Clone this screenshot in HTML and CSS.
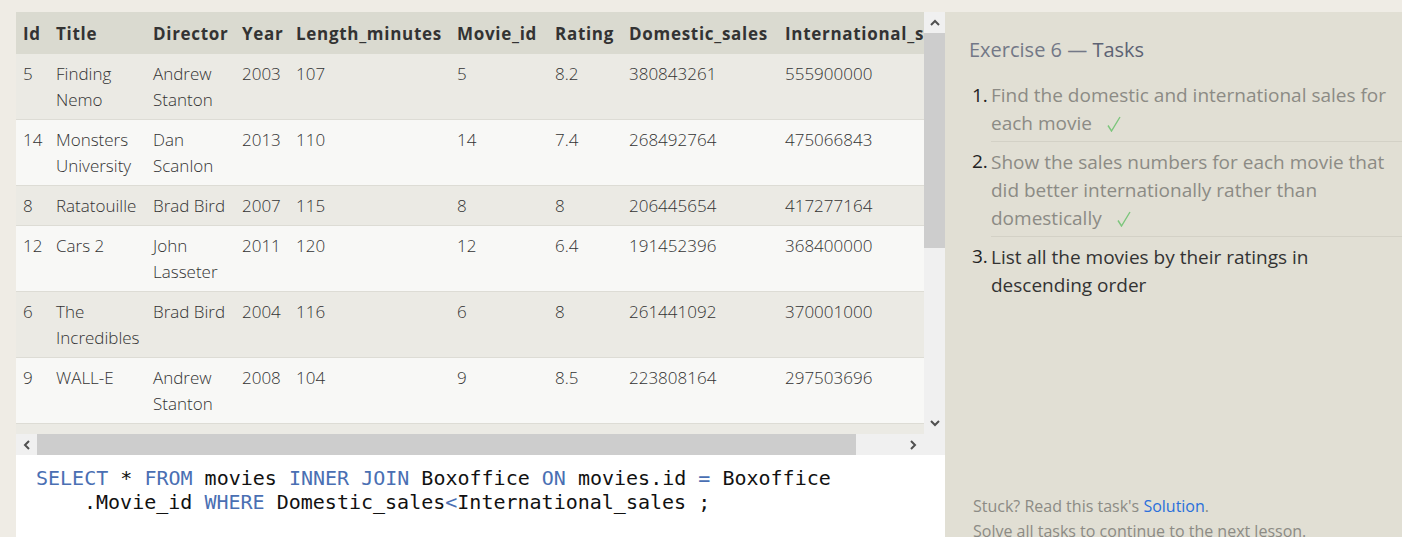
FILE: index.html
```html
<!DOCTYPE html>
<html lang="en">
<head>
<meta charset="utf-8">
<title>SQL Lesson 6 — Exercise</title>
<link rel="stylesheet" href="styles.css">
</head>
<body>
<div class="app">
  <div class="workspace">
    <div class="results">
      <div class="viewport">
        <table class="grid">
          <colgroup>
            <col class="c-id"><col class="c-title"><col class="c-director"><col class="c-year"><col class="c-length"><col class="c-movieid"><col class="c-rating"><col class="c-dom"><col class="c-int">
          </colgroup>
          <thead>
            <tr><th>Id</th><th>Title</th><th>Director</th><th>Year</th><th>Length_minutes</th><th>Movie_id</th><th>Rating</th><th>Domestic_sales</th><th>International_sales</th></tr>
          </thead>
          <tbody>
            <tr><td>5</td><td>Finding<br>Nemo</td><td>Andrew<br>Stanton</td><td>2003</td><td>107</td><td>5</td><td>8.2</td><td>380843261</td><td>555900000</td></tr>
            <tr><td>14</td><td>Monsters<br>University</td><td>Dan<br>Scanlon</td><td>2013</td><td>110</td><td>14</td><td>7.4</td><td>268492764</td><td>475066843</td></tr>
            <tr><td>8</td><td>Ratatouille</td><td>Brad Bird</td><td>2007</td><td>115</td><td>8</td><td>8</td><td>206445654</td><td>417277164</td></tr>
            <tr><td>12</td><td>Cars 2</td><td>John<br>Lasseter</td><td>2011</td><td>120</td><td>12</td><td>6.4</td><td>191452396</td><td>368400000</td></tr>
            <tr><td>6</td><td>The<br>Incredibles</td><td>Brad Bird</td><td>2004</td><td>116</td><td>6</td><td>8</td><td>261441092</td><td>370001000</td></tr>
            <tr><td>9</td><td>WALL-E</td><td>Andrew<br>Stanton</td><td>2008</td><td>104</td><td>9</td><td>8.5</td><td>223808164</td><td>297503696</td></tr>
            <tr><td>10</td><td>Up</td><td>Pete<br>Docter</td><td>2009</td><td>101</td><td>10</td><td>8.3</td><td>293004164</td><td>438338580</td></tr>
          </tbody>
        </table>
      </div>
      <div class="vscroll">
        <div class="sb-btn"><svg width="10" height="7" viewBox="0 0 10 7"><path d="M1 6 L5 2 L9 6" fill="none" stroke="#505050" stroke-width="2"/></svg></div>
        <div class="vthumb"></div>
        <div class="sb-track"></div>
        <div class="sb-btn"><svg width="10" height="7" viewBox="0 0 10 7"><path d="M1 1 L5 5 L9 1" fill="none" stroke="#505050" stroke-width="2"/></svg></div>
      </div>
      <div class="hscroll">
        <div class="sb-btn"><svg width="7" height="10" viewBox="0 0 7 10"><path d="M6 1 L2 5 L6 9" fill="none" stroke="#505050" stroke-width="2"/></svg></div>
        <div class="hthumb"></div>
        <div class="sb-track"></div>
        <div class="sb-btn"><svg width="7" height="10" viewBox="0 0 7 10"><path d="M1 1 L5 5 L1 9" fill="none" stroke="#505050" stroke-width="2"/></svg></div>
      </div>
      <div class="corner"></div>
    </div>
    <div class="editor">
      <div class="code-line"><span class="kw">SELECT</span> * <span class="kw">FROM</span> movies <span class="kw">INNER</span> <span class="kw">JOIN</span> Boxoffice <span class="kw">ON</span> movies.id <span class="kw">=</span> Boxoffice</div>
      <div class="code-line wrapped">.Movie_id <span class="kw">WHERE</span> Domestic_sales<span class="kw">&lt;</span>International_sales ;</div>
    </div>
  </div>
  <aside class="tasks">
    <h2 class="tasks-title">Exercise 6 — <span class="tasks-strong">Tasks</span></h2>
    <ol class="task-list">
      <li class="task done"><span class="num">1.</span><span class="txt">Find the domestic and international sales for each movie <svg class="check" width="14" height="16" viewBox="0 0 14 16"><path d="M1 9.5 L4.5 15 L13 1" fill="none" stroke="#7cc67c" stroke-width="1.4"/></svg></span></li>
      <li class="task done"><span class="num">2.</span><span class="txt">Show the sales numbers for each movie that did better internationally rather than domestically <svg class="check" width="14" height="16" viewBox="0 0 14 16"><path d="M1 9.5 L4.5 15 L13 1" fill="none" stroke="#7cc67c" stroke-width="1.4"/></svg></span></li>
      <li class="task"><span class="num">3.</span><span class="txt">List all the movies by their ratings in descending order</span></li>
    </ol>
    <div class="tasks-footer">
      <div>Stuck? Read this task's <a class="link" href="#">Solution</a>.</div>
      <div>Solve all tasks to continue to the next lesson.</div>
    </div>
  </aside>
</div>
</body>
</html>
```
FILE: styles.css
```css
html, body {
  margin: 0;
  height: 100%;
}
body {
  background: #efece5;
  overflow: hidden;
  font-family: "Open Sans", "Noto Sans", sans-serif;
}
.app {
  display: flex;
  padding: 12px 0 0 16px;
  height: 537px;
  box-sizing: border-box;
}
.workspace {
  width: 929px;
  flex: none;
  display: flex;
  flex-direction: column;
}
.results {
  display: grid;
  grid-template-columns: 908px 21px;
  grid-template-rows: 422px 21px;
}
.viewport {
  overflow: hidden;
  background: #ebeae4;
}
.grid {
  border-collapse: collapse;
  table-layout: fixed;
  width: 1000px;
  font-size: 17px;
  color: #333;
}
.c-id { width: 33px; }
.c-title { width: 97px; }
.c-director { width: 89px; }
.c-year { width: 54px; }
.c-length { width: 161px; }
.c-movieid { width: 98px; }
.c-rating { width: 74px; }
.c-dom { width: 156px; }
.c-int { width: 238px; }
.grid th, .grid td {
  text-align: left;
  vertical-align: top;
  line-height: 26px;
  white-space: nowrap;
  padding: 7px 7px 6px;
}
.grid td {
  font-weight: 300;
}
.grid th {
  background: #dadad0;
  font-weight: 700;
  color: #333;
  letter-spacing: 0.7px;
  padding: 9px 7px 7px;
}
.grid tbody tr {
  border-bottom: 1px solid #dddcd5;
}
.grid tbody tr:nth-child(odd) td {
  background: #ebeae4;
}
.grid tbody tr:nth-child(even) td {
  background: #f8f8f6;
}
.vscroll {
  display: flex;
  flex-direction: column;
  background: #f0f0f0;
}
.hscroll {
  display: flex;
  background: #f0f0f0;
}
.sb-btn {
  flex: none;
  width: 21px;
  height: 21px;
  display: flex;
  align-items: center;
  justify-content: center;
}
.vthumb {
  height: 215px;
  background: #cdcdcd;
}
.hthumb {
  width: 819px;
  background: #cdcdcd;
}
.sb-track {
  flex: 1;
}
.corner {
  background: #f0f0f0;
}
.editor {
  flex: 1;
  background: #fff;
  padding: 11px 0 0 20px;
  font-family: "DejaVu Sans Mono", "Liberation Mono", monospace;
  font-size: 20px;
  line-height: 24px;
  color: #111;
}
.code-line {
  white-space: pre;
}
.code-line.wrapped {
  padding-left: 48px;
}
.kw {
  color: #4a6fb3;
}
.tasks {
  flex: 1;
  background: #e1dfd4;
  padding: 24px 0 0 24px;
  height: 525px;
  box-sizing: border-box;
  display: flex;
  flex-direction: column;
  overflow: hidden;
}
.tasks-title {
  margin: 0;
  font-size: 20px;
  line-height: 28px;
  font-weight: 400;
  color: #737887;
}
.tasks-strong {
  color: #5d6374;
}
.task-list {
  list-style: none;
  margin: 11px 0 0;
  padding: 0;
}
.task {
  display: flex;
  padding-left: 3px;
  font-size: 19px;
  line-height: 28px;
}
.num {
  flex: none;
  width: 19px;
  color: #222;
  padding-top: 6px;
}
.txt {
  flex: 1;
  padding: 6px 12px 4px 0;
  color: #333;
}
.task + .task .txt {
  border-top: 1px solid #d3d1c6;
}
.task.done .txt {
  color: #8c8b85;
}
.check {
  margin-left: 10px;
  vertical-align: -2px;
}
.tasks-footer {
  margin-top: auto;
  margin-bottom: -7px;
  padding-left: 4px;
  font-size: 16px;
  line-height: 25px;
  color: #8c8b85;
}
.link {
  color: #2a6fdb;
  text-decoration: none;
}
```
